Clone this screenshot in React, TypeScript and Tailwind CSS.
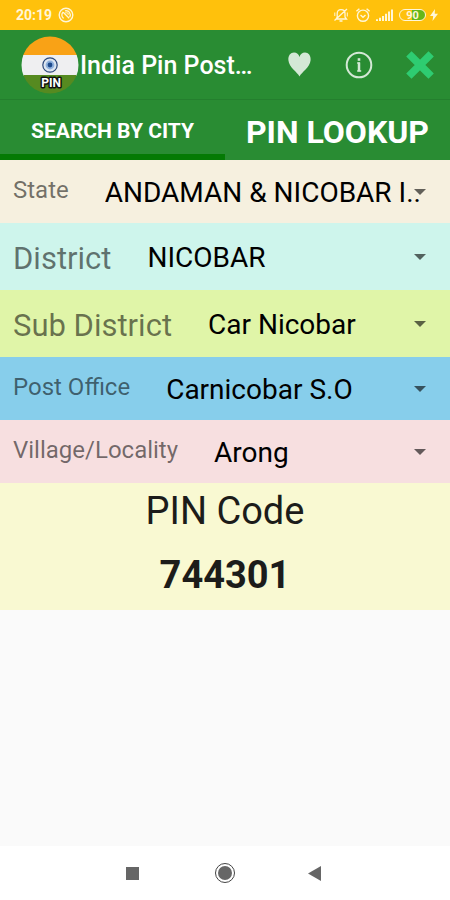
import { useState } from 'react';

interface Field {
  id: string;
  label: string;
  options: string[];
  rowClass: string;
  labelClass: string;
}

const fields: Field[] = [
  {
    id: 'state',
    label: 'State',
    options: ['ANDAMAN & NICOBAR I..'],
    rowClass: 'h-[63px] bg-[#f6f0df]',
    labelClass: 'pb-1 text-[24px]',
  },
  {
    id: 'district',
    label: 'District',
    options: ['NICOBAR'],
    rowClass: 'h-[67px] bg-[#cef5ec]',
    labelClass: 'pt-1 text-[31px]',
  },
  {
    id: 'sub-district',
    label: 'Sub District',
    options: ['Car Nicobar'],
    rowClass: 'h-[67px] bg-[#e0f5a8]',
    labelClass: 'pt-1 text-[31px]',
  },
  {
    id: 'post-office',
    label: 'Post Office',
    options: ['Carnicobar S.O'],
    rowClass: 'h-[63px] bg-[#87ceeb]',
    labelClass: 'pb-1 text-[24px]',
  },
  {
    id: 'village',
    label: 'Village/Locality',
    options: ['Arong'],
    rowClass: 'h-[63px] bg-[#f7dfe0]',
    labelClass: 'pb-1 text-[24px]',
  },
];

const StatusBar = () => (
  <div className="flex h-[30px] items-center bg-[#ffc10c] pl-4 pr-3 text-[#fff6d8]">
    <span className="text-[14px] font-bold">20:19</span>
    <svg className="ml-1.5 size-4" viewBox="0 0 16 16" fill="none" stroke="currentColor">
      <circle cx="8" cy="8" r="6.8" strokeWidth="1.4" />
      <path d="M5.6 11.4A4.200 4.200 0 0 1 5.200 4.900M7 3.900a4.200 4.200 0 0 1 4.700 6.200M5.200 5.200l6 6" strokeWidth="1.3" />
      <path d="M7.200 5.800h1.600a1.500 1.500 0 0 1 1.400 2" strokeWidth="1" />
    </svg>
    <div className="ml-auto flex items-center">
      <svg className="size-4" viewBox="0 0 16 16" fill="none" stroke="currentColor" strokeWidth="1.3">
        <path d="M3 12h10.500l-1.500-2V6.500C12 4 10.500 2.700 8 2.700S4.200 4 4.200 6.500V10L3 12ZM6.500 14h3M1.500 13.500 14 2" />
        <path d="M14.300 5.500v4M1.800 5.500v3.500" strokeWidth="1" />
      </svg>
      <svg className="ml-1.5 size-4" viewBox="0 0 16 16" fill="none" stroke="currentColor" strokeWidth="1.4">
        <circle cx="8" cy="8.7" r="5.600" />
        <path d="m5.500 8 2.500 2.200L10.500 8M1.400 4.300l3-2.600M14.600 4.300l-3-2.600" />
      </svg>
      <svg className="ml-1 h-4 w-[18px]" viewBox="0 0 18 16" fill="currentColor">
        <path d="M1 12.200h2V14H1zM4 10.800h2V14H4zM7 9h2v5H7zM10 6.800h2V14h-2zM13 4.500h2V14h-2zM16 2.500h2V14h-2z" />
      </svg>
      <div className="ml-1.5 flex h-3 w-[27px] items-center justify-center rounded-full border border-current bg-linear-to-r from-transparent from-50% to-[#65b719] to-50% text-[11px] font-bold leading-none">
        90
      </div>
      <svg className="ml-1 h-3 w-2" viewBox="0 0 8 12" fill="currentColor">
        <path d="M5 0 0 7h3.200L2.500 12 8 4.800H4.700z" />
      </svg>
    </div>
  </div>
);

const Logo = () => (
  <svg className="size-[58px] shrink-0" viewBox="0 0 58 58">
    <defs>
      <clipPath id="flag">
        <circle cx="29" cy="29" r="28.5" />
      </clipPath>
    </defs>
    <g clipPath="url(#flag)">
      <path d="M0 0h58v20H0z" fill="#f9a216" />
      <path d="M0 19h58v21H0z" fill="#efeff1" />
      <path d="M0 39h58v19H0z" fill="#568a20" />
    </g>
    <circle cx="29" cy="29" r="7.200" fill="#dde5f0" stroke="#2c4778" strokeWidth="1.200" />
    <circle cx="29" cy="29" r="4.400" fill="#8fb0dc" />
    <circle cx="29" cy="29" r="2.400" fill="#1e4a8c" />
    <text
      x="30"
      y="51"
      textAnchor="middle"
      fontSize="12"
      fontWeight="700"
      fill="#fff"
      stroke="#101010"
      strokeWidth="3"
      strokeLinejoin="round"
      paintOrder="stroke"
    >
      PIN
    </text>
  </svg>
);

const AppHeader = () => (
  <header className="flex h-[70px] items-center border-b border-[#247f2e] bg-[#298c33] pl-[21px] pr-[15px]">
    <Logo />
    <h1 className="min-w-0 flex-1 truncate pl-px pt-0.5 text-[25px] font-medium text-white">India Pin Post…</h1>
    <div className="flex shrink-0 items-center gap-8 pl-8">
      <button type="button" aria-label="Favourite" className="flex size-7 items-center justify-center">
        <svg className="h-[25px] w-[23px]" viewBox="0 0 23 25" fill="#d4e8d6">
          <path d="M11.500 24.500C9.500 20 1 15.500.4 8.200 0 3.600 2.600.5 6 .5c2.800 0 4.700 1.500 5.500 4.500C12.300 2 14.200.5 17 .5c3.400 0 6 3.100 5.600 7.700C22 15.500 13.500 20 11.500 24.500Z" />
        </svg>
      </button>
      <button type="button" aria-label="About" className="flex size-7 items-center justify-center">
        <svg className="size-7" viewBox="0 0 28 28" fill="none" stroke="#d4e8d6">
          <circle cx="14" cy="14" r="12.300" strokeWidth="2" />
          <path d="M12.200 12h2v8.200M12.200 20h4" strokeWidth="1.500" />
          <path d="M14 11.500v8.800" strokeWidth="2.500" />
          <path d="M12.700 8.500h2.600" strokeWidth="2.600" />
        </svg>
      </button>
      <button type="button" aria-label="Close" className="flex size-[30px] items-center justify-center">
        <svg className="size-[30px]" viewBox="0 0 30 30" fill="none" stroke="#2ecc71" strokeWidth="7.500" strokeLinecap="square">
          <path d="m6.500 6.500 17 17M23.500 6.500l-17 17" />
        </svg>
      </button>
    </div>
  </header>
);

const SpinnerRow = ({ field }: { field: Field }) => {
  const [value, setValue] = useState(field.options[0]);

  return (
    <div className={`flex items-center gap-9 pl-[13px] pr-6 ${field.rowClass}`}>
      <label htmlFor={field.id} className={`shrink-0 leading-none text-black/55 ${field.labelClass}`}>
        {field.label}
      </label>
      <div className="relative min-w-0 flex-1">
        <select
          id={field.id}
          value={value}
          onChange={(e) => setValue(e.target.value)}
          className="h-10 w-full appearance-none truncate bg-transparent text-[28px] text-black outline-none"
        >
          {field.options.map((option) => (
            <option key={option}>{option}</option>
          ))}
        </select>
        <svg className="pointer-events-none absolute right-0 top-[17px] h-1.5 w-3" viewBox="0 0 12 6">
          <path d="M0 0h12L6 6z" fill="#000" fillOpacity="0.6" />
        </svg>
      </div>
    </div>
  );
};

const NavBar = () => (
  <nav className="flex h-[54px] items-center justify-center gap-[73px] bg-white">
    <button type="button" aria-label="Recent apps" className="flex size-5 items-center justify-center">
      <span className="size-[13px] bg-[#666]" />
    </button>
    <button type="button" aria-label="Home" className="flex size-5 items-center justify-center rounded-full border border-[#444]">
      <span className="size-3.5 rounded-full bg-[#666]" />
    </button>
    <button type="button" aria-label="Back" className="flex size-5 items-center">
      <svg className="h-[15px] w-[13px]" viewBox="0 0 13 15">
        <path d="M13 0v15L0 7.500z" fill="#666" />
      </svg>
    </button>
  </nav>
);

export default function App() {
  return (
    <div className="flex min-h-screen flex-col bg-[#fafafa] font-['Roboto',sans-serif]">
      <StatusBar />
      <AppHeader />
      <div role="tablist" className="grid h-[60px] grid-cols-2 bg-[#298c33] text-white">
        <button
          type="button"
          role="tab"
          aria-selected="true"
          className="pt-1 text-[21px] font-bold shadow-[inset_0_-6px_0_#047a04]"
        >
          SEARCH BY CITY
        </button>
        <button type="button" role="tab" aria-selected="false" className="pt-1 text-[32px] font-bold">
          PIN LOOKUP
        </button>
      </div>
      <main className="flex-1">
        {fields.map((field) => (
          <SpinnerRow key={field.id} field={field} />
        ))}
        <section className="h-[127px] bg-[#f9f9d2] text-center text-[38px] leading-[56px] text-[#1c1c1a]">
          <h2>PIN Code</h2>
          <p className="pt-2 font-bold">744301</p>
        </section>
      </main>
      <NavBar />
    </div>
  );
}
